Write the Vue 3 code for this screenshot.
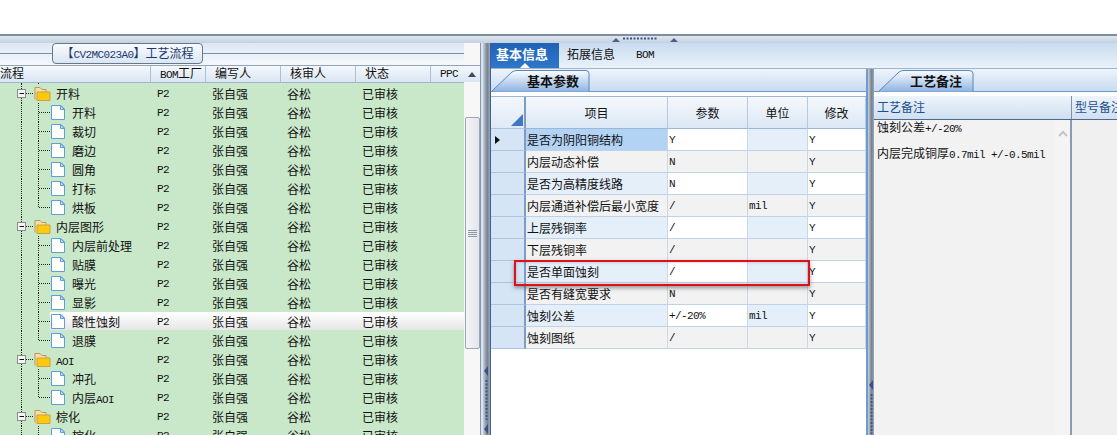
<script setup>
const groups = [
  { name: '开料', kids: ['开料', '裁切', '磨边', '圆角', '打标', '烘板'] },
  { name: '内层图形', kids: ['内层前处理', '贴膜', '曝光', '显影', '酸性蚀刻', '退膜'] },
  { name: 'AOI', kids: ['冲孔', '内层AOI'] },
  { name: '棕化', kids: ['棕化'] },
]
const treeRows = [{ type: 'kid', name: '', last: false }]
groups.forEach((g) => {
  treeRows.push({ type: 'group', name: g.name })
  g.kids.forEach((k, i) => treeRows.push({ type: 'kid', name: k, last: i === g.kids.length - 1 }))
})
const runs = (s) => (s.match(/[A-Za-z0-9]+|[^A-Za-z0-9]+/g) || []).map((t) => ({ t, lat: /^[A-Za-z0-9]/.test(t) }))

const params = [
  ['是否为阴阳铜结构', 'Y', '', 'Y'],
  ['内层动态补偿', 'N', '', 'Y'],
  ['是否为高精度线路', 'N', '', 'Y'],
  ['内层通道补偿后最小宽度', '/', 'mil', 'Y'],
  ['上层残铜率', '/', '', 'Y'],
  ['下层残铜率', '/', '', 'Y'],
  ['是否单面蚀刻', '/', '', 'Y'],
  ['是否有缝宽要求', 'N', '', 'Y'],
  ['蚀刻公差', '+/-20%', 'mil', 'Y'],
  ['蚀刻图纸', '/', '', 'Y'],
]
</script>

<template>
  <div class="app">
    <div class="blank"></div>
    <div class="hsplit">
      <svg width="70" height="7" class="hgrip">
        <path d="M2 6 L6 2 L10 6 Z M60 6 L64 2 L68 6 Z" fill="#4a5f8c" />
        <path d="M13 2.5 H47" stroke="#3f5488" stroke-width="2" stroke-dasharray="2 1.5" />
      </svg>
    </div>
    <div class="main">
      <section class="left">
        <div class="flow">
          <div class="legend">
            <span class="legend-line"></span>
            <span class="chip">【<span class="lat">CV2MC023A0</span>】工艺流程</span>
            <span class="legend-end"></span>
          </div>
          <div class="thead">
            <span class="th first">流程</span>
            <span class="th"><span class="lat">BOM</span>工厂</span>
            <span class="th">编写人</span>
            <span class="th">核审人</span>
            <span class="th">状态</span>
            <span class="th lat">PPC</span>
          </div>
          <div class="tbody">
            <div v-for="(r, i) in treeRows" :key="i" class="trow" :class="{ sel: r.name === '酸性蚀刻', peek: i === 0 }">
              <div class="tree">
                <svg :width="r.type === 'group' ? 56 : 72" height="19" class="glyph">
                  <path d="M21.5 0 V19" stroke="#222" stroke-dasharray="1 1" />
                  <template v-if="r.type === 'group'">
                    <path d="M26 9.5 H33" stroke="#222" stroke-dasharray="1 1" />
                    <rect x="17.5" y="5.5" width="8" height="8" fill="#f4f4f4" stroke="#8b8b8b" />
                    <path d="M19.5 9.5 H24" stroke="#111" />
                    <path d="M35 15.5 V3.5 H40 L42 5.5 H46 V8" fill="#f5dfa6" stroke="#b9975a" />
                    <path d="M37 8 H50 V16.5 H37 Z" fill="#fdc90f" stroke="#c9a142" />
                  </template>
                  <template v-else>
                    <path :d="r.last ? 'M38.5 0 V10' : 'M38.5 0 V19'" stroke="#222" stroke-dasharray="1 1" />
                    <path d="M39 9.5 H50" stroke="#222" stroke-dasharray="1 1" />
                    <path d="M51.5 2.5 H61 L64.5 6 V16.5 H51.5 Z" fill="#fff" stroke="#5f9ed8" />
                    <path d="M60.5 2.5 V6.5 H64.5 Z" fill="#bcd8f2" stroke="#5f9ed8" />
                  </template>
                </svg>
                <span class="label"><span v-for="(s, j) in runs(r.name)" :key="j" :class="{ lat: s.lat }">{{ s.t }}</span></span>
              </div>
              <template v-if="i > 0">
                <span class="td lat">P2</span>
                <span class="td">张自强</span>
                <span class="td">谷松</span>
                <span class="td">已审核</span>
                <span class="td"></span>
              </template>
            </div>
          </div>
        </div>
        <div class="vbar">
          <div class="vbar-up"><svg width="10" height="6"><path d="M1 6 L5 1 L9 6 Z" fill="#3d4a57" /></svg></div>
          <div class="thumb"><svg width="9" height="7"><path d="M0 .5 H9 M0 2.5 H9 M0 4.5 H9 M0 6.5 H9" stroke="#8d97a3" /></svg></div>
        </div>
        <div class="edge"></div>
      </section>

      <div class="vsplit first-split">
        <svg width="5" height="70">
          <path d="M4 0 L0 5 L4 10 Z M4 58 L0 63 L4 68 Z" fill="#3d5180" />
          <path d="M2.5 14 V54" stroke="#3f5488" stroke-width="2" stroke-dasharray="2 1.5" />
        </svg>
      </div>

      <section class="right">
        <nav class="tabs">
          <span class="tab on">基本信息</span>
          <span class="tab t2">拓展信息</span>
          <span class="tab t3 lat">BOM</span>
        </nav>
        <div class="panes">
          <div class="pane params">
            <div class="subtabs">
              <div class="subtab s1">
                <svg width="100" height="22" class="tabshape">
                  <defs><linearGradient id="tg" x1="0" y1="0" x2="0" y2="1"><stop offset="0" stop-color="#fbfdff" /><stop offset="1" stop-color="#8fb4e2" /></linearGradient></defs>
                  <path d="M.5 21.5 L21 2 Q23 .5 26 .5 H95 Q98 .5 98 3.5 V21.5" fill="url(#tg)" stroke="#5b86bd" />
                </svg>
                <span class="subtext">基本参数</span>
              </div>
            </div>
            <div class="grid">
              <div class="grow ghead">
                <div class="rh"><svg width="12" height="12"><path d="M0 12 L12 0 V12 Z" fill="#3f78c4" /></svg></div>
                <div class="gh">项目</div>
                <div class="gh">参数</div>
                <div class="gh">单位</div>
                <div class="gh">修改</div>
              </div>
              <div v-for="(p, i) in params" :key="i" class="grow" :class="i % 2 ? 'even' : 'odd'">
                <div class="rh body-rh">
                  <svg v-if="i === 0" width="5" height="8"><path d="M0 0 L5 4 L0 8 Z" fill="#111" /></svg>
                </div>
                <div class="c item" :class="{ current: i === 0 }">{{ p[0] }}</div>
                <div class="c lat">{{ p[1] }}</div>
                <div class="c lat unit">{{ p[2] }}</div>
                <div class="c lat">{{ p[3] }}</div>
              </div>
              <div class="redbox"></div>
            </div>
          </div>

          <div class="vsplit second-split">
            <svg width="5" height="60">
              <path d="M4 0 L0 5 L4 10 Z" fill="#3d5180" />
              <path d="M2.5 14 V54" stroke="#3f5488" stroke-width="2" stroke-dasharray="2 1.5" />
            </svg>
          </div>

          <div class="pane notes">
            <div class="subtabs note-tabs">
              <div class="subtab s2">
                <svg width="96" height="22" class="tabshape">
                  <path d="M.5 21.5 L21 2 Q23 .5 26 .5 H91 Q95 .5 95 3.5 V21.5" fill="url(#tg)" stroke="#5b86bd" />
                </svg>
                <span class="subtext">工艺备注</span>
              </div>
            </div>
            <div class="nhead">
              <span class="nh n1">工艺备注</span>
              <span class="nh n2">型号备注</span>
            </div>
            <div class="nbody">
              <div class="ntext">
                <p>蚀刻公差<span class="lat">+/-20%</span></p>
                <p class="second">内层完成铜厚<span class="lat">0.7mil +/-0.5mil</span></p>
              </div>
              <div class="nscroll"><svg width="10" height="7"><path d="M1 6 L5 2 L9 6" fill="none" stroke="#c4c4c4" stroke-width="2" /></svg></div>
              <div class="nrest"></div>
            </div>
          </div>
        </div>
      </section>
    </div>
  </div>
</template>

<style scoped>
.app {
  width: 1117px;
  height: 435px;
  overflow: hidden;
  background: #fff;
  display: flex;
  flex-direction: column;
  font: 12px/1.2 "Noto Sans CJK SC", "Liberation Sans", sans-serif;
  color: #111;
}
.lat {
  font-family: "Liberation Mono", "DejaVu Sans Mono", monospace;
  font-size: 11px;
  letter-spacing: -0.6px;
}
.blank { height: 34px; flex: none; }
.hsplit {
  height: 9px;
  flex: none;
  box-sizing: border-box;
  border-top: 2px solid #7f8e9e;
  background: linear-gradient(#dfe6ee, #c3d1e0);
  display: flex;
  justify-content: flex-start;
  padding-left: 610px;
}
.hgrip { display: block; }
.main { flex: 1; display: flex; min-height: 0; }

/* left tree panel */
.left { width: 483px; flex: none; display: flex; flex-wrap: wrap; align-content: flex-start; background: linear-gradient(#dde8f4, #f4f8fc 22px); position: relative; }
.flow { width: 464px; display: flex; flex-direction: column; height: 392px; }
.legend { height: 22px; flex: none; display: flex; width: 481px; }
.legend-line { width: 52px; height: 10px; border-bottom: 1px solid #7c8ea3; flex: none; }
.chip {
  width: 151px;
  height: 21px;
  flex: none;
  box-sizing: border-box;
  border: 1px solid #66788e;
  border-radius: 4px;
  background: linear-gradient(#f8fbfe, #dbe6f2);
  color: #1a3a6e;
  text-align: center;
  line-height: 18px;
  white-space: nowrap;
}
.legend-end {
  flex: 1;
  height: 22px;
  margin-top: 10px;
  border-top: 1px solid #7c8ea3;
  border-right: 1px solid #7c8ea3;
  border-top-right-radius: 7px;
}
.thead, .trow { display: grid; grid-template-columns: 151px 55px 75px 75px 75px 33px; flex: none; }
.thead {
  height: 18px;
  box-sizing: border-box;
  border-top: 1px solid #8fa3bb;
  border-bottom: 1px solid #9fb6d3;
  background: linear-gradient(#f5f8fc, #d9e5f2);
  line-height: 14px;
  position: relative;
  z-index: 1;
}
.th { padding-left: 9px; border-right: 1px solid #aebfd2; white-space: nowrap; font-size: 12px; }
.th.first { padding-left: 0; }
.th:last-child { border-right: 0; }
.th.lat { font-size: 11px; line-height: 16px; }
.tbody { flex: 1; overflow: hidden; background: #c9e8c9; min-height: 0; }
.trow { height: 19px; line-height: 19px; white-space: nowrap; }
.trow.peek { margin-top: -18px; }
.trow.sel { background: linear-gradient(#fff, #e6e6e6) no-repeat 50px 0 / 100% 18px; }
.tree { display: flex; overflow: hidden; }
.glyph { flex: none; display: block; }
.td { padding-left: 6px; }
.td.lat { line-height: 21px; }
.vbar {
  width: 16px;
  height: 392px;
  background: #f7f7f8;
  display: flex;
  flex-direction: column;
  align-items: center;
  position: relative;
  z-index: 2;
  padding-top: 22px;
  box-sizing: border-box;
}
.vbar-up { height: 17px; display: flex; align-items: center; justify-content: center; background: linear-gradient(#f5f8fc, #d9e5f2); width: 100%; border-top: 1px solid #8fa3bb; box-sizing: border-box; }
.thumb {
  margin-top: 35px;
  width: 15px;
  height: 232px;
  flex: none;
  box-sizing: border-box;
  border: 1px solid #9da7b3;
  border-radius: 2px;
  background: linear-gradient(90deg, #f4f5f8, #e2e5ec);
  display: flex;
  align-items: center;
  justify-content: center;
}
.edge { width: 3px; height: 392px; box-sizing: border-box; border-left: 1px solid #8898aa; background: #d9e4f0; }

/* splitters */
.vsplit {
  flex: none;
  box-sizing: border-box;
  display: flex;
  justify-content: center;
  background: linear-gradient(90deg, #c7d1dc, #75828f 60%, #9da8b3);
}
.first-split { width: 8px; padding-top: 323px; border-right: 1px solid #3f5f9f; }
.second-split { width: 6px; padding-top: 311px; }

/* right side */
.right { flex: 1; display: flex; flex-direction: column; min-width: 0; }
.tabs {
  height: 26px;
  flex: none;
  display: flex;
  box-sizing: border-box;
  border-bottom: 1px solid #9fb3c9;
  background: linear-gradient(#c8dbef, #eaf2fa);
}
.tab { font-size: 12px; line-height: 22px; white-space: nowrap; }
.tab.on {
  width: 68px;
  height: 25px;
  box-sizing: border-box;
  padding-left: 5px;
  font-size: 13px;
  line-height: 21px;
  background: linear-gradient(#1f63b5, #2f77c9);
  color: #fff;
  font-weight: 700;
  position: relative;
}
.tab.on::after {
  content: "";
  position: absolute;
  left: 29px;
  bottom: 0;
  border: 5px solid transparent;
  border-top: 0;
  border-bottom-color: #fff;
}
.t2 { margin-left: 8px; }
.t3 { margin-left: 21px; font-size: 11px; line-height: 24px; }
.panes { flex: 1; display: flex; min-height: 0; }
.pane { display: flex; flex-direction: column; background: #fff; }
.params { width: 377px; flex: none; box-sizing: border-box; border-right: 2px solid #6f9ad0; }
.notes { flex: 1; min-width: 0; }
.subtabs {
  height: 23px;
  flex: none;
  padding-top: 1px;
  box-sizing: border-box;
  display: flex;
  border-bottom: 1px solid #6f9ad0;
  background: linear-gradient(#eef4fb, #c8daf0);
}
.note-tabs { padding-left: 4px; }
.subtab { position: relative; height: 21px; font-size: 13px; font-weight: 700; line-height: 21px; }
.s1 { width: 100px; padding-left: 36px; box-sizing: border-box; }
.s2 { width: 96px; padding-left: 32px; box-sizing: border-box; }
.tabshape { position: absolute; left: 0; top: 0; }
.subtext { position: relative; }
.grid { position: relative; margin-top: 4px; border-top: 1px solid #9db6d6; }
.grow { display: grid; grid-template-columns: 35px 142px 80px 60px 58px; height: 22px; line-height: 21px; white-space: nowrap; }
.ghead { height: 32px; }
.rh {
  box-sizing: border-box;
  border-right: 2px solid #7d9cc6;
  border-bottom: 1px solid #aec4de;
  background: #d6e5f6;
  display: flex;
  align-items: center;
  padding-left: 4px;
}
.ghead .rh { align-items: flex-end; justify-content: flex-end; padding: 0 1px 2px 0; background: linear-gradient(#f4f8fd, #dfe9f6); }
.gh {
  box-sizing: border-box;
  text-align: center;
  line-height: 31px;
  border-right: 1px solid #b5c9e0;
  border-bottom: 1px solid #9db6d6;
  background: linear-gradient(#f6f9fd, #dbe7f5);
}
.c {
  box-sizing: border-box;
  padding-left: 1px;
  border-right: 1px solid #c9d8ea;
  border-bottom: 1px solid #c0d2e8;
  overflow: hidden;
}
.c.lat { line-height: 23px; }
.odd .c { background: #fff; }
.odd .item, .odd .unit { background: #e5effa; }
.even .c { background: #f2f2f2; }
.odd .item.current { background: #b3d3f5; }
.redbox {
  position: absolute;
  left: 23px;
  top: 163px;
  width: 296px;
  height: 26px;
  box-sizing: border-box;
  border: 2px solid #e01018;
  box-shadow: 0 2px 4px rgba(60, 60, 60, .5), inset 0 0 3px rgba(60, 60, 60, .35);
}

/* notes */
.nhead {
  margin-top: 4px;
  height: 24px;
  flex: none;
  display: flex;
  box-sizing: border-box;
  border-bottom: 1px solid #4f6a86;
  background: linear-gradient(#eef4fb, #cfdff1);
  color: #1c4f8f;
  line-height: 22px;
  overflow: hidden;
  white-space: nowrap;
}
.nh { box-sizing: border-box; padding-left: 3px; }
.n1 { width: 198px; flex: none; border-right: 1px solid #7f92a8; }
.nbody { flex: 1; display: flex; min-height: 0; }
.ntext { width: 181px; flex: none; background: #f2f2f2; padding-left: 3px; box-sizing: border-box; white-space: nowrap; }
.ntext p { margin: 0; line-height: 14px; }
.ntext .second { margin-top: 10px; }
.nscroll { width: 17px; flex: none; background: #f4f4f4; box-sizing: border-box; border-right: 2px solid #8b9bb1; padding: 5px 0 0 3px; }
.nrest { flex: 1; background: #f0f0f0; }
</style>
